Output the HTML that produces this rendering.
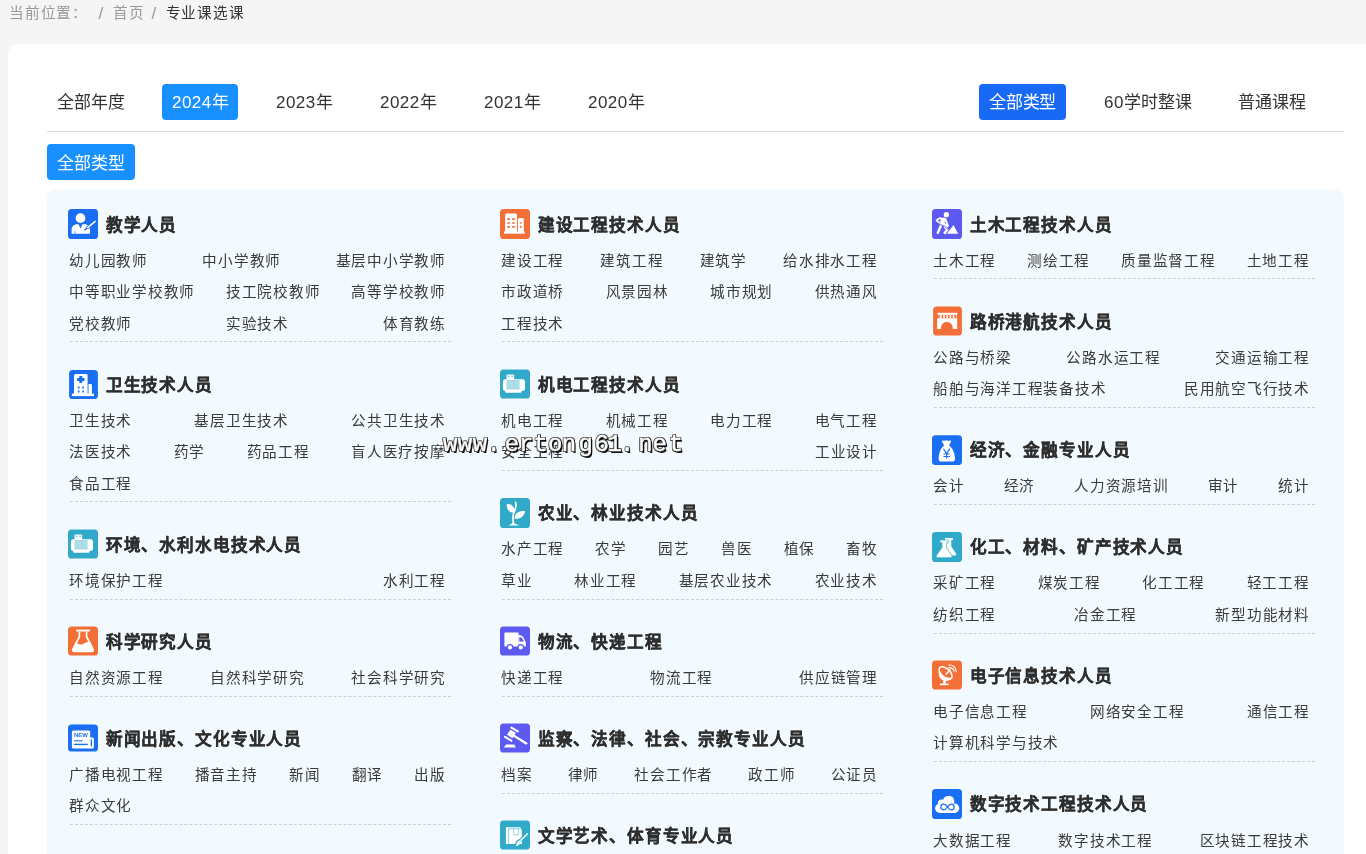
<!DOCTYPE html>
<html lang="zh-CN">
<head>
<meta charset="utf-8">
<title>专业课选课</title>
<style>
*{box-sizing:border-box;margin:0;padding:0}
html,body{width:1366px;height:854px;overflow:hidden}
body{background:#f5f5f5;font-family:"Liberation Sans",sans-serif;color:#333;position:relative}
a{text-decoration:none;color:inherit}
.crumb{will-change:transform;position:absolute;left:0;top:1px;height:25px;line-height:25px;font-size:14.6px;letter-spacing:.75px;color:#999;white-space:nowrap}
.crumb span{position:absolute;top:0;text-align:justify;text-align-last:justify}
.c1{left:9px;width:78.75px}.c2{left:98.5px;font-size:17px}.c3{left:113px;width:31.5px}.c4{left:151.5px;font-size:17px}.c5{left:165.5px;width:78.75px;color:#333}
.card{will-change:transform;position:absolute;left:8px;top:44px;width:1358px;height:810px;background:#fff;border-radius:10px 0 0 0;overflow:hidden}
.filters{position:absolute;left:39px;top:28px;width:1297px;height:60px;border-bottom:1px solid #dcdcdc}
.f{position:absolute;top:12px;height:36px;line-height:37px;padding:0 10px;text-align:justify;text-align-last:justify;font-size:17px;letter-spacing:-.2px;color:#333;border-radius:4px;white-space:nowrap}
.f b{font-weight:normal;letter-spacing:.45px}
.f.on{background:#1890ff;color:#fff}
.f.on2{background:#186af5;color:#fff}
.sub{position:absolute;left:39px;top:100px;width:88px;height:36px;line-height:39px;padding:0 10.3px;text-align:justify;text-align-last:justify;font-size:17px;letter-spacing:-.2px;color:#fff;background:#1890ff;border-radius:4px;white-space:nowrap}
.panel{position:absolute;left:39px;top:146px;width:1297px;height:700px;background:#f3faff;border-radius:8px}
.col{position:absolute;top:0;width:432px;padding:19px 0 0 21px}
.g{width:383px;margin-bottom:26.7px}
.rs{margin-left:2px;padding-bottom:2.25px;border-bottom:1px dashed #cfcfcf}
.t{height:30px;display:flex;align-items:center;margin-bottom:5.65px}
.ic{flex:none;display:block}
h3{font-size:16.6px;letter-spacing:.85px;font-weight:bold;color:#2e2e2e;-webkit-text-stroke:.3px #2e2e2e;margin-left:7.8px;white-space:nowrap;text-align:justify;text-align-last:justify;flex:none;line-height:30px;padding-top:3px}
.r{display:flex;justify-content:space-between;height:31.5px;line-height:32.5px;font-size:14.6px;letter-spacing:.75px;color:#3a3a3a;margin-left:-1px;padding-right:6px;white-space:nowrap}
.r span{margin-right:-.75px;flex:none;text-align:justify;text-align-last:justify}
.wm{position:absolute;left:434.9px;top:388px;height:26px;font-family:"Liberation Mono",monospace;font-size:24px;color:#fff;-webkit-text-stroke:.45px #fff;white-space:nowrap;line-height:26px;text-shadow:1px 1px 0 #111,1.6px 1.6px 0 #111,1px 0 0 #222,0 1px 0 #222,-1px 0 0 #554,0 -1px 0 #555,-1px -1px 0 #777,1px -1px 0 #445,-1px 1px 0 #554}
.wm i{position:absolute;top:0;font-style:normal;width:14.4px;text-align:center}
</style>
</head>
<body>
<div class="crumb"><span class="c1">当前位置：</span><span class="c2">/</span><span class="c3">首页</span><span class="c4">/</span><span class="c5">专业课选课</span></div>
<div class="card">
<div class="filters">
<a class="f" style="left:0px;width:87.5px">全部年度</a>
<a class="f on" style="left:115px;width:76px"><b>2024</b>年</a>
<a class="f" style="left:219px;width:76px"><b>2023</b>年</a>
<a class="f" style="left:323px;width:76px"><b>2022</b>年</a>
<a class="f" style="left:427px;width:76px"><b>2021</b>年</a>
<a class="f" style="left:531px;width:76px"><b>2020</b>年</a>
<a class="f on2" style="left:932px;width:87px">全部类型</a>
<a class="f" style="left:1047px;width:107.5px"><b>60</b>学时整课</a>
<a class="f" style="left:1181px;width:87.5px">普通课程</a>
</div>
<a class="sub">全部类型</a>
<div class="panel">
<div class="col" style="left:0px">
<div class="g">
<div class="t"><svg class="ic" width="30" height="30" viewBox="0 0 30 30"><g transform="translate(0 0)"><rect width="30" height="30" rx="3.6" fill="#1a6ef2"/><circle cx="12.5" cy="9.1" r="4.9" fill="#fff"/><path d="M3.6 24.8V20.6C3.6 17.6 6 15.3 9 15.3H10.5L12.5 19.5L14.5 15.3H16.6C19.6 15.3 22 17.6 22 20.6V24.8Z" fill="#fff"/><path d="M7.2 22.2V24.8" stroke="#1a6ef2" stroke-width=".7"/><path d="M19 19.2L27.6 12" stroke="#1a6ef2" stroke-width="3"/><path d="M17 20.8L19.6 18.6" stroke="#1a6ef2" stroke-width="1.4" stroke-linecap="round"/><path d="M19.7 18.6L27.2 12.4" stroke="#fff" stroke-width="1.5" stroke-linecap="round"/></g></svg><h3 style="width:71.4px">教学人员</h3></div>
<div class="rs">
<div class="r"><span style="width:78.75px">幼儿园教师</span><span style="width:78.75px">中小学教师</span><span style="width:110.25px">基层中小学教师</span></div>
<div class="r"><span style="width:126.0px">中等职业学校教师</span><span style="width:94.5px">技工院校教师</span><span style="width:94.5px">高等学校教师</span></div>
<div class="r"><span style="width:63.0px">党校教师</span><span style="width:63.0px">实验技术</span><span style="width:63.0px">体育教练</span></div>
</div>
</div>
<div class="g">
<div class="t"><svg class="ic" width="30" height="30" viewBox="0 0 30 30"><g transform="translate(1.1 1)"><rect width="28.8" height="29" rx="3.6" fill="#1a6ef2"/><path d="M4.9 24V5.6Q4.9 4.1 6.4 4.1H17Q18.5 4.1 18.5 5.6V24Z" fill="#fff"/><path d="M19.4 24V14.1H21.8Q22.8 14.1 22.8 15.1V24Z" fill="#fff"/><rect x="2.8" y="23.6" width="22" height="2.5" fill="#fff"/><path d="M11.7 5.9V13M8 9.45H15.4" stroke="#1a6ef2" stroke-width="3" stroke-linejoin="round"/><path d="M9.6 17.3V21.5M14 17.3V21.5" stroke="#1a6ef2" stroke-opacity=".35" stroke-width=".9"/><path d="M9.6 16.5V18.2M9.6 20.7V22.4M14 16.5V18.2M14 20.7V22.4" stroke="#1a6ef2" stroke-width="1.7"/></g></svg><h3 style="width:107.1px">卫生技术人员</h3></div>
<div class="rs">
<div class="r"><span style="width:63.0px">卫生技术</span><span style="width:94.5px">基层卫生技术</span><span style="width:94.5px">公共卫生技术</span></div>
<div class="r"><span style="width:63.0px">法医技术</span><span style="width:31.5px">药学</span><span style="width:63.0px">药品工程</span><span style="width:94.5px">盲人医疗按摩</span></div>
<div class="r"><span style="width:63.0px">食品工程</span></div>
</div>
</div>
<div class="g">
<div class="t"><svg class="ic" width="30" height="30" viewBox="0 0 30 30"><g transform="translate(0 0.5)"><rect width="30" height="29" rx="3.6" fill="#30aac8"/><rect x="6.5" y="5" width="7.7" height="6" rx=".6" fill="#fff"/><rect x="2.9" y="9.8" width="22.1" height="11.8" rx="2.4" fill="#fff"/><rect x="5.1" y="19" width="16.4" height="4.3" rx="1" fill="#fff"/><circle cx="8.7" cy="6.7" r=".7" fill="#30aac8"/><circle cx="12.1" cy="6.7" r=".7" fill="#30aac8"/><rect x="6.5" y="10.5" width="13.1" height="9.4" fill="#30aac8" fill-opacity=".45"/><path d="M6.5 12.4H19.6M6.5 14.3H19.6M6.5 16.2H19.6M6.5 18.1H19.6" stroke="#fff" stroke-opacity=".45" stroke-width=".5"/></g></svg><h3 style="width:196.35px">环境、水利水电技术人员</h3></div>
<div class="rs">
<div class="r"><span style="width:94.5px">环境保护工程</span><span style="width:63.0px">水利工程</span></div>
</div>
</div>
<div class="g">
<div class="t"><svg class="ic" width="30" height="30" viewBox="0 0 30 30"><g transform="translate(0 0.5)"><rect width="30" height="29" rx="3.6" fill="#f46e38"/><rect x="8.1" y="3.1" width="13.8" height="1.9" fill="#fff"/><path d="M11.4 5V10.2L5.1 22.3Q4 25 6.6 25H23.4Q26 25 24.9 22.3L18.6 10.2V5" fill="none" stroke="#fff" stroke-width="1.7"/><path d="M8 16.5C10 16.8 11.4 18.4 13.5 18C15.8 17.6 17.6 15.5 21.2 15.2L25 23Q25.4 25 23.4 25H6.6Q4.6 25 5 23Z" fill="#fff"/></g></svg><h3 style="width:107.1px">科学研究人员</h3></div>
<div class="rs">
<div class="r"><span style="width:94.5px">自然资源工程</span><span style="width:94.5px">自然科学研究</span><span style="width:94.5px">社会科学研究</span></div>
</div>
</div>
<div class="g">
<div class="t"><svg class="ic" width="30" height="30" viewBox="0 0 30 30"><g transform="translate(0 1.5)"><rect width="30" height="27" rx="3.6" fill="#1a6ef2"/><path d="M3.9 7.4Q3.9 5.9 5.4 5.9H20.7Q22.2 5.9 22.2 7.4V12.9H24.4Q25.9 12.9 25.9 14.4V22.6Q25.9 24.1 24.4 24.1H5.4Q3.9 24.1 3.9 22.6Z" fill="#fff"/><path d="M23.4 14.8V22" stroke="#1a6ef2" stroke-width="1.3"/><text x="6" y="12.8" font-family="Liberation Sans, sans-serif" font-weight="bold" font-size="4.9" textLength="14" lengthAdjust="spacingAndGlyphs" fill="#1a6ef2">NEW</text><path d="M6 16.3H14.7" stroke="#1a6ef2" stroke-width="1.1"/><path d="M6 19.9H19.8" stroke="#1a6ef2" stroke-width="1.4"/></g></svg><h3 style="width:196.35px">新闻出版、文化专业人员</h3></div>
<div class="rs">
<div class="r"><span style="width:94.5px">广播电视工程</span><span style="width:63.0px">播音主持</span><span style="width:31.5px">新闻</span><span style="width:31.5px">翻译</span><span style="width:31.5px">出版</span></div>
<div class="r"><span style="width:63.0px">群众文化</span></div>
</div>
</div>
</div>
<div class="col" style="left:432px">
<div class="g">
<div class="t"><svg class="ic" width="30" height="30" viewBox="0 0 30 30"><g transform="translate(0 0)"><rect width="30" height="30" rx="3.6" fill="#f46e38"/><path d="M5.1 23V6.1Q5.1 4.6 6.6 4.6H15.5Q17 4.6 17 6.1V23Z" fill="#fff"/><path d="M17.9 23V10.5Q17.9 9 19.4 9H22.3Q23.8 9 23.8 10.5V23Z" fill="#fff"/><rect x="4.1" y="22.5" width="20.6" height="2.2" fill="#fff"/><path d="M7.3 10.1H10M12.1 10.1H14.8M7.3 14H10M12.1 14H14.8M7.3 17.9H10M12.1 17.9H14.8M19.8 14H21.6M19.8 17.9H21.6" stroke="#f46e38" stroke-width="1.6"/></g></svg><h3 style="width:142.8px">建设工程技术人员</h3></div>
<div class="rs">
<div class="r"><span style="width:63.0px">建设工程</span><span style="width:63.0px">建筑工程</span><span style="width:47.25px">建筑学</span><span style="width:94.5px">给水排水工程</span></div>
<div class="r"><span style="width:63.0px">市政道桥</span><span style="width:63.0px">风景园林</span><span style="width:63.0px">城市规划</span><span style="width:63.0px">供热通风</span></div>
<div class="r"><span style="width:63.0px">工程技术</span></div>
</div>
</div>
<div class="g">
<div class="t"><svg class="ic" width="30" height="30" viewBox="0 0 30 30"><g transform="translate(0 0.5)"><rect width="30" height="29" rx="3.6" fill="#30aac8"/><rect x="6.5" y="5" width="7.7" height="6" rx=".6" fill="#fff"/><rect x="2.9" y="9.8" width="22.1" height="11.8" rx="2.4" fill="#fff"/><rect x="5.1" y="19" width="16.4" height="4.3" rx="1" fill="#fff"/><circle cx="8.7" cy="6.7" r=".7" fill="#30aac8"/><circle cx="12.1" cy="6.7" r=".7" fill="#30aac8"/><rect x="6.5" y="10.5" width="13.1" height="9.4" fill="#30aac8" fill-opacity=".45"/><path d="M6.5 12.4H19.6M6.5 14.3H19.6M6.5 16.2H19.6M6.5 18.1H19.6" stroke="#fff" stroke-opacity=".45" stroke-width=".5"/></g></svg><h3 style="width:142.8px">机电工程技术人员</h3></div>
<div class="rs">
<div class="r"><span style="width:63.0px">机电工程</span><span style="width:63.0px">机械工程</span><span style="width:63.0px">电力工程</span><span style="width:63.0px">电气工程</span></div>
<div class="r"><span style="width:63.0px">安全工程</span><span style="width:63.0px">工业设计</span></div>
</div>
</div>
<div class="g">
<div class="t"><svg class="ic" width="30" height="30" viewBox="0 0 30 30"><g transform="translate(0 0)"><rect width="30" height="30" rx="3.6" fill="#30aac8"/><path d="M6.9 6C11.5 5.6 15 9 14.2 14.6C9.6 15 6.3 11.6 6.9 6Z" fill="#fff"/><path d="M25.3 13.2C23.8 19 19.5 21.6 14.3 20.6C14.8 15 19.6 12.2 25.3 13.2Z" fill="#fff"/><path d="M15.6 4.4C16.6 8.5 15.4 11.5 14 14.4C12.4 17.6 12.6 20.5 13.4 25.2" fill="none" stroke="#fff" stroke-width="1.7" stroke-linecap="round"/><path d="M8.4 27.6C10 26.4 12 25.9 13.4 24.2C14.8 25.9 17.4 26.4 19.3 27.6Z" fill="#fff"/></g></svg><h3 style="width:160.65px">农业、林业技术人员</h3></div>
<div class="rs">
<div class="r"><span style="width:63.0px">水产工程</span><span style="width:31.5px">农学</span><span style="width:31.5px">园艺</span><span style="width:31.5px">兽医</span><span style="width:31.5px">植保</span><span style="width:31.5px">畜牧</span></div>
<div class="r"><span style="width:31.5px">草业</span><span style="width:63.0px">林业工程</span><span style="width:94.5px">基层农业技术</span><span style="width:63.0px">农业技术</span></div>
</div>
</div>
<div class="g">
<div class="t"><svg class="ic" width="30" height="30" viewBox="0 0 30 30"><g transform="translate(0 0.5)"><rect width="30" height="29" rx="3.6" fill="#5c5af0"/><rect x="4.4" y="5.9" width="14.2" height="14.2" rx=".6" fill="#fff"/><path d="M18.4 8.3L21.8 9.3Q22.6 9.6 23.1 10.4L25.4 14.8Q25.8 15.5 25.8 16.3V20.1H18.4Z" fill="#fff"/><path d="M19.3 10.8H21.3L24.1 14.9H19.3Z" fill="#5c5af0"/><circle cx="10" cy="20.9" r="3.4" fill="#5c5af0"/><circle cx="20.8" cy="20.9" r="3.4" fill="#5c5af0"/><circle cx="10" cy="20.9" r="2.1" fill="#fff"/><circle cx="20.8" cy="20.9" r="2.1" fill="#fff"/></g></svg><h3 style="width:124.95px">物流、快递工程</h3></div>
<div class="rs">
<div class="r"><span style="width:63.0px">快递工程</span><span style="width:63.0px">物流工程</span><span style="width:78.75px">供应链管理</span></div>
</div>
</div>
<div class="g">
<div class="t"><svg class="ic" width="30" height="30" viewBox="0 0 30 30"><g transform="translate(0 0.5)"><rect width="30" height="29" rx="3.6" fill="#5c5af0"/><path d="M11.4 4.1L17.8 7.8" stroke="#fff" stroke-width="2.1" stroke-linecap="round"/><path d="M5 13.4L11.3 17.1" stroke="#fff" stroke-width="2.1" stroke-linecap="round"/><path d="M10.5 6.2L15.9 9.4L12.6 14.7L7 11.2Z" fill="#fff"/><path d="M14.1 11.1L26.9 18.9Q27.9 19.7 27.3 20.6Q26.6 21.4 25.6 20.9L13.1 12.9Z" fill="#fff"/><path d="M6 20.9H14.2L15.9 24H3.9Z" fill="#fff"/></g></svg><h3 style="width:267.75px">监察、法律、社会、宗教专业人员</h3></div>
<div class="rs">
<div class="r"><span style="width:31.5px">档案</span><span style="width:31.5px">律师</span><span style="width:78.75px">社会工作者</span><span style="width:47.25px">政工师</span><span style="width:47.25px">公证员</span></div>
</div>
</div>
<div class="g">
<div class="t"><svg class="ic" width="30" height="30" viewBox="0 0 30 30"><g transform="translate(0 0.5)"><rect width="30" height="29" rx="3.6" fill="#30aac8"/><path d="M5.9 6.8H20.3L21.9 9.9V23.4H5.9Z" fill="#fff"/><path d="M8.6 23.4V8.3H20.4" fill="none" stroke="#30aac8" stroke-width=".7" stroke-opacity=".85"/><path d="M13.9 8.3V14.2H18.4V8.3" fill="none" stroke="#30aac8" stroke-width=".7" stroke-opacity=".7"/><path d="M16 24.6C17 23.6 16.4 22.4 17.6 21.2C18.4 20.4 19.4 20 20.4 19.6L27.6 12.8" fill="none" stroke="#30aac8" stroke-width="2.9" stroke-linecap="round"/><path d="M15.4 25.3C17.2 25.7 19 24.8 19.8 23.2C20.3 22.2 20 21.2 19.4 20.6C18 20.6 17 21.4 16.8 22.6C16.6 23.8 16.2 24.6 15.4 25.3Z" fill="#fff"/><path d="M19.4 21L27.5 13.2" stroke="#fff" stroke-width="1.5" stroke-linecap="round"/></g></svg><h3 style="width:196.35px">文学艺术、体育专业人员</h3></div>
<div class="rs">
<div class="r"><span style="width:63.0px">文学创作</span><span style="width:31.5px">艺术</span><span style="width:31.5px">体育</span></div>
</div>
</div>
</div>
<div class="col" style="left:864px">
<div class="g">
<div class="t"><svg class="ic" width="30" height="30" viewBox="0 0 30 30"><g transform="translate(0 0)"><rect width="30" height="30" rx="3.6" fill="#5c5af0"/><circle cx="14.4" cy="5.7" r="2.6" fill="#fff"/><path d="M7.3 8.5L12.9 8.7Q14 8.9 14.4 10L16.9 16.8L15.9 18.2L13.6 17.4L8 15.5L8.3 12.6Z" fill="#fff"/><path d="M7.8 9.2L4.5 11.3L7.2 13.6" fill="none" stroke="#fff" stroke-width="1.7" stroke-linejoin="round" stroke-linecap="round"/><path d="M9.4 15.6L5.4 24.7" stroke="#fff" stroke-width="2.5"/><path d="M12.4 17L15.3 20.6L12.1 24.7" fill="none" stroke="#fff" stroke-width="2.5" stroke-linejoin="round"/><path d="M7.3 9.9L9 10.4L7.6 12.4Z" fill="#5c5af0"/><path d="M13 12.6L13.9 15.2" stroke="#5c5af0" stroke-width=".8"/><path d="M7.4 15.4L12.8 17.2L17 21.6" fill="none" stroke="#5c5af0" stroke-width=".9"/><path d="M21.5 16L26.2 24.7H14.8Z" fill="#fff"/></g></svg><h3 style="width:142.8px">土木工程技术人员</h3></div>
<div class="rs">
<div class="r"><span style="width:63.0px">土木工程</span><span style="width:63.0px">测绘工程</span><span style="width:94.5px">质量监督工程</span><span style="width:63.0px">土地工程</span></div>
</div>
</div>
<div class="g">
<div class="t"><svg class="ic" width="30" height="30" viewBox="0 0 30 30"><g transform="translate(1.1 0.5)"><rect width="28.8" height="29" rx="3.6" fill="#f46e38"/><rect x="4.4" y="6.3" width="20" height="1.9" fill="#fff"/><rect x="5.2" y="8.2" width="18.4" height="3.8" fill="#fff"/><path d="M5.9 8.4V11.6M9.3 8.4V11.6M12.5 8.4V11.6M15.7 8.4V11.6M18.9 8.4V11.6M22.1 8.4V11.6" stroke="#f46e38" stroke-width="1.6"/><path d="M4 11.9H24.1V22.5H19.7V22C19.7 18 17 15.6 13.8 15.6C10.6 15.6 7.9 18 7.9 22V22.5H4Z" fill="#fff"/></g></svg><h3 style="width:142.8px">路桥港航技术人员</h3></div>
<div class="rs">
<div class="r"><span style="width:78.75px">公路与桥梁</span><span style="width:94.5px">公路水运工程</span><span style="width:94.5px">交通运输工程</span></div>
<div class="r"><span style="width:173.25px">船舶与海洋工程装备技术</span><span style="width:126.0px">民用航空飞行技术</span></div>
</div>
</div>
<div class="g">
<div class="t"><svg class="ic" width="30" height="30" viewBox="0 0 30 30"><g transform="translate(0 0.3)"><rect width="30" height="29.8" rx="3.6" fill="#1a6ef2"/><path d="M9.9 6.4Q9.9 5 11.3 5.3Q12.6 5.8 13.5 5.3Q14.5 4.6 15.5 5.3Q16.6 5.9 17.8 5.3Q19.2 5 19 6.5L17.1 10.3C20.5 12.6 22.7 17.4 23 23.2Q23.1 26.3 20.3 26.3H9.3Q6.5 26.3 6.6 23.2C6.9 17.4 8.9 12.6 12.2 10.3Z" fill="#fff"/><path d="M11.4 13.4L14.6 18.1L17.9 13.4M14.6 18.1V23.5M11.4 18.7H17.9M11.4 21.2H17.9" fill="none" stroke="#1a6ef2" stroke-width="1.15"/></g></svg><h3 style="width:160.65px">经济、金融专业人员</h3></div>
<div class="rs">
<div class="r"><span style="width:31.5px">会计</span><span style="width:31.5px">经济</span><span style="width:94.5px">人力资源培训</span><span style="width:31.5px">审计</span><span style="width:31.5px">统计</span></div>
</div>
</div>
<div class="g">
<div class="t"><svg class="ic" width="30" height="30" viewBox="0 0 30 30"><g transform="translate(0 0)"><rect width="30" height="30" rx="3.6" fill="#30aac8"/><path d="M13 5.9H20.9V8H19.3V14.4L24 21.6Q24.8 23.5 22.8 23.5H14Z" fill="#fff"/><path d="M8 8H16.3V10.7H14.6V15.8L19.8 23.4Q20.8 25.7 18.4 25.7H5.8Q3.4 25.7 4.4 23.4L9.9 15.8V10.7H8Z" fill="#fff" stroke="#30aac8" stroke-width=".7"/></g></svg><h3 style="width:214.2px">化工、材料、矿产技术人员</h3></div>
<div class="rs">
<div class="r"><span style="width:63.0px">采矿工程</span><span style="width:63.0px">煤炭工程</span><span style="width:63.0px">化工工程</span><span style="width:63.0px">轻工工程</span></div>
<div class="r"><span style="width:63.0px">纺织工程</span><span style="width:63.0px">冶金工程</span><span style="width:94.5px">新型功能材料</span></div>
</div>
</div>
<div class="g">
<div class="t"><svg class="ic" width="30" height="30" viewBox="0 0 30 30"><g transform="translate(0 0.5)"><rect width="30" height="29" rx="3.6" fill="#f46e38"/><path d="M7.6 8.2C5.6 12.8 7 17.6 10.6 19.6C14.4 21.6 18.6 20.2 20.4 16.6C17.6 18 13.6 17.2 10.6 14.6C8.2 12.4 7.2 10.2 7.6 8.2Z" fill="#fff"/><ellipse cx="13.6" cy="12.5" rx="7.9" ry="4.3" transform="rotate(42 13.6 12.5)" fill="none" stroke="#fff" stroke-width="1.5"/><path d="M14.2 13.6L18.2 9.2" stroke="#fff" stroke-width="1.5" stroke-linecap="round"/><path d="M16.6 7.3C18.8 6.6 21.6 8 22 10.5" fill="none" stroke="#fff" stroke-width="1.2" stroke-linecap="round"/><path d="M17 4.6C20.6 4 24 6.8 24.3 11.2" fill="none" stroke="#fff" stroke-width="1.2" stroke-linecap="round"/><path d="M11.2 19.4H13.8V23.3H11.2Z" fill="#fff"/><rect x="8" y="23.1" width="8.7" height="1.6" fill="#fff"/></g></svg><h3 style="width:142.8px">电子信息技术人员</h3></div>
<div class="rs">
<div class="r"><span style="width:94.5px">电子信息工程</span><span style="width:94.5px">网络安全工程</span><span style="width:63.0px">通信工程</span></div>
<div class="r"><span style="width:126.0px">计算机科学与技术</span></div>
</div>
</div>
<div class="g">
<div class="t"><svg class="ic" width="30" height="30" viewBox="0 0 30 30"><g transform="translate(0 0)"><rect width="30" height="30" rx="3.6" fill="#1a6ef2"/><circle cx="16.6" cy="12.4" r="5.7" fill="#fff"/><circle cx="9.6" cy="14.2" r="3.6" fill="#fff"/><rect x="3.1" y="14.6" width="24.2" height="9.3" rx="4.65" fill="#fff"/><path d="M15.5 18C13.8 15.6 12.6 15.2 11.6 15.2C10 15.2 8.9 16.4 8.9 18C8.9 19.6 10 20.8 11.6 20.8C12.6 20.8 13.8 20.4 15.5 18C17.2 15.6 18.4 15.2 19.4 15.2C21 15.2 22.1 16.4 22.1 18C22.1 19.6 21 20.8 19.4 20.8C18.4 20.8 17.2 20.4 15.5 18Z" fill="none" stroke="#1a6ef2" stroke-width="1.25"/></g></svg><h3 style="width:178.5px">数字技术工程技术人员</h3></div>
<div class="rs">
<div class="r"><span style="width:78.75px">大数据工程</span><span style="width:94.5px">数字技术工程</span><span style="width:110.25px">区块链工程技术</span></div>
</div>
</div>
</div>
</div>
<div class="wm"><i style="left:0.0px">w</i><i style="left:14.9px">w</i><i style="left:29.8px">w</i><i style="left:43.6px">.</i><i style="left:61.9px">e</i><i style="left:76.1px">r</i><i style="left:90.6px">t</i><i style="left:105.2px">o</i><i style="left:118.8px">n</i><i style="left:135.6px">g</i><i style="left:151.7px">6</i><i style="left:164.7px">1</i><i style="left:177.1px">.</i><i style="left:195.4px">n</i><i style="left:209.7px">e</i><i style="left:225.9px">t</i></div>
</div>
</body>
</html>
